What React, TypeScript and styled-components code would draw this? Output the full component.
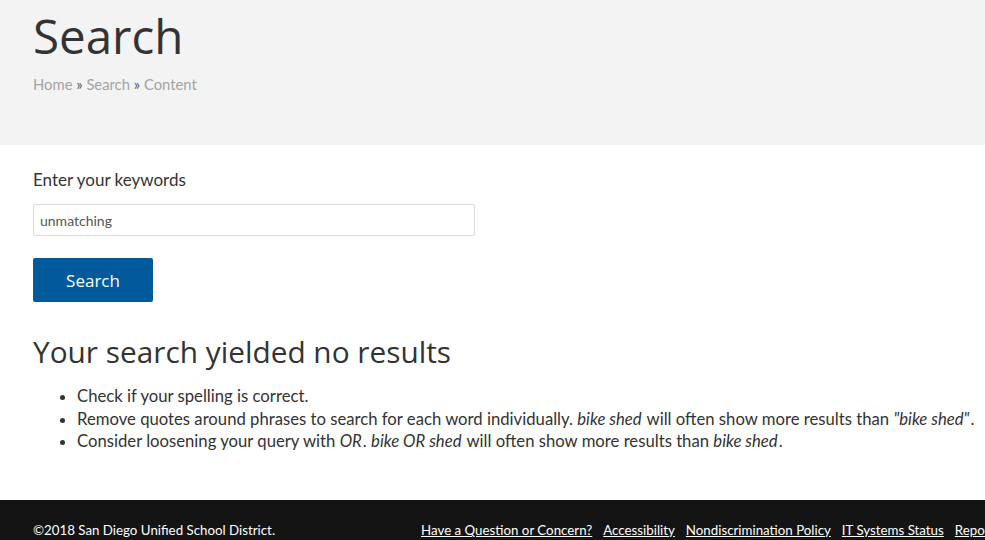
import { FC } from "react";
import styled, { createGlobalStyle } from "styled-components";

const GlobalStyle = createGlobalStyle`
    html, body {
        margin: 0;
        padding: 0;
        overflow: hidden;
        background: #ffffff;
    }
    body {
        font-family: Lato, "Liberation Sans", sans-serif;
        color: #333333;
    }
`;

const Page = styled.div`
    width: 1240px;
`;

const Banner = styled.header`
    background: #f3f3f3;
    height: 145px;
    padding: 0 33px;
    box-sizing: border-box;
    overflow: hidden;
`;

const Title = styled.h1`
    margin: 0;
    padding-top: 6px;
    font-family: "Open Sans", sans-serif;
    font-weight: 400;
    font-size: 47.5px;
    line-height: 60px;
    color: #333333;
`;

const Crumbs = styled.nav`
    margin-top: 8px;
    font-size: 14.8px;
    line-height: 20px;
    color: #555555;
`;

const Crumb = styled.a`
    color: #a3a3a3;
    text-decoration: none;
`;

const Main = styled.main`
    padding: 25px 33px 0;
    height: 355px;
    box-sizing: border-box;
`;

const Label = styled.label`
    display: block;
    font-size: 17px;
    line-height: 20px;
    color: #333333;
`;

const Input = styled.input`
    display: block;
    margin-top: 14px;
    width: 442px;
    height: 32px;
    box-sizing: border-box;
    border: 1px solid #dcdcdc;
    border-radius: 2px;
    padding: 0 6px;
    font-family: Lato, sans-serif;
    font-size: 14px;
    color: #555555;
    outline: none;
`;

const Button = styled.button`
    display: block;
    margin-top: 22px;
    width: 120px;
    height: 44px;
    border: none;
    border-radius: 2px;
    background: #005a9c;
    color: #ffffff;
    font-family: "Open Sans", sans-serif;
    font-size: 17px;
    cursor: pointer;
`;

const Heading = styled.h2`
    margin: 32px 0 0;
    font-family: "Open Sans", sans-serif;
    font-weight: 400;
    font-size: 29.8px;
    line-height: 36px;
    color: #333333;
`;

const Tips = styled.ul`
    margin: 15px 0 0;
    padding-left: 44px;
    font-size: 16.7px;
    line-height: 22.5px;
    white-space: nowrap;

    em {
        padding-right: 1px;
    }
`;

const Footer = styled.footer`
    background: #141414;
    height: 60px;
    padding: 0 33px;
    box-sizing: border-box;
    display: flex;
    align-items: center;
    gap: 146px;
    font-size: 13.3px;
    color: #ffffff;
    white-space: nowrap;
`;

const FooterLinks = styled.div`
    display: flex;
    gap: 11px;
`;

const FooterLink = styled.a`
    color: #ffffff;
    text-decoration: underline;
`;

const links = [
    "Have a Question or Concern?",
    "Accessibility",
    "Nondiscrimination Policy",
    "IT Systems Status",
    "Report Fraud",
];

const App: FC = () => (
    <Page>
        <GlobalStyle />
        <Banner>
            <Title>Search</Title>
            <Crumbs>
                <Crumb href="#">Home</Crumb> » <Crumb href="#">Search</Crumb> »{" "}
                <Crumb href="#">Content</Crumb>
            </Crumbs>
        </Banner>
        <Main>
            <Label htmlFor="keys">Enter your keywords</Label>
            <Input id="keys" defaultValue="unmatching" />
            <Button>Search</Button>
            <Heading>Your search yielded no results</Heading>
            <Tips>
                <li>Check if your spelling is correct.</li>
                <li>
                    Remove quotes around phrases to search for each word individually.{" "}
                    <em>bike shed</em> will often show more results than <em>"bike shed"</em>.
                </li>
                <li>
                    Consider loosening your query with <em>OR</em>. <em>bike OR shed</em> will
                    often show more results than <em>bike shed</em>.
                </li>
            </Tips>
        </Main>
        <Footer>
            <span>©2018 San Diego Unified School District.</span>
            <FooterLinks>
                {links.map((l) => (
                    <FooterLink key={l} href="#">{l}</FooterLink>
                ))}
            </FooterLinks>
        </Footer>
    </Page>
);

export default App;
